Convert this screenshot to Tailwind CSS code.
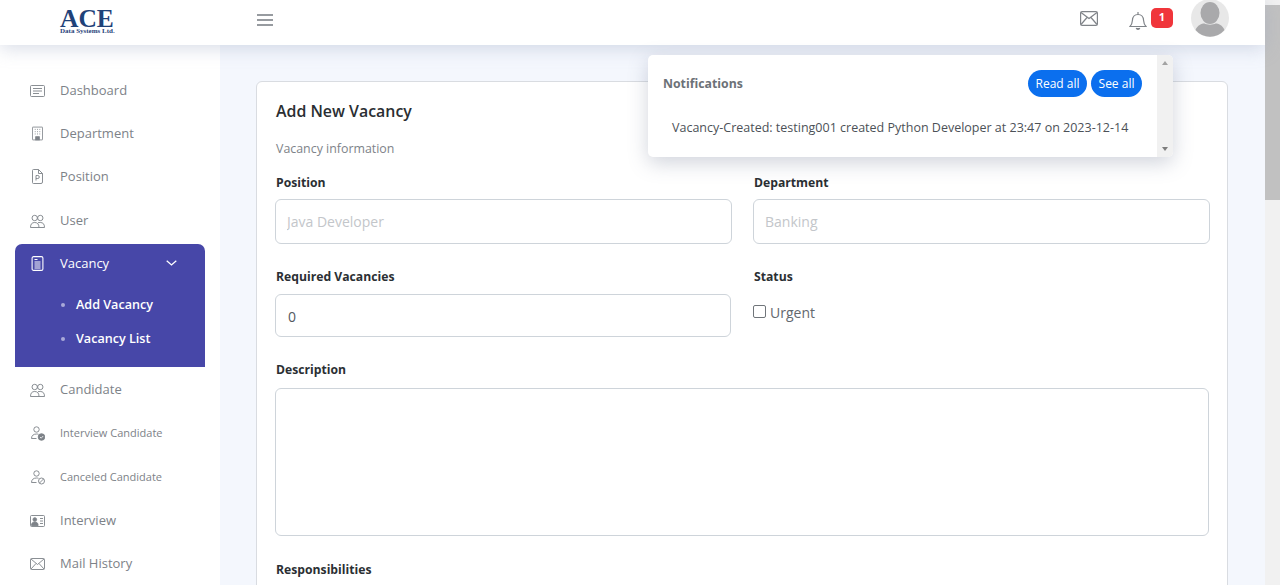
<!DOCTYPE html>
<html lang="en">
<head>
  <meta charset="UTF-8" />
  <title>Add New Vacancy - ACE</title>
  <script src="https://cdn.jsdelivr.net/npm/@tailwindcss/browser@4"></script>
</head>
<body class="h-[585px] overflow-hidden bg-[#f4f7fd] font-['Open_Sans',sans-serif]">
  <div class="relative flex h-[585px]">
    <div class="flex w-[1265px] flex-col">

      <!-- Header -->
      <header class="relative z-10 flex h-[45px] shrink-0 items-center bg-white shadow-[0_4px_18px_rgba(150,160,190,0.35)]">
        <div class="mt-[-1px] w-[257px] shrink-0 pl-[60px]">
          <div class="h-[19px] font-['Liberation_Serif',serif] text-[25.500px] leading-[20px] font-bold text-[#1f4279]">ACE</div>
          <div class="font-['Liberation_Serif',serif] text-[7px] leading-[7px] font-bold whitespace-nowrap text-[#1f4279]">Data Systems Ltd.</div>
        </div>
        <svg class="mt-[-5px] h-[20px] w-[16px] text-[#757b81]" viewBox="0 0 16 20" fill="none" stroke="currentColor" stroke-width="1.3"><path d="M0 5h16M0 10h16M0 15h16"/></svg>
        <div class="ml-auto flex items-center pr-[36px]">
          <svg class="mt-[-8px] h-[15px] w-[18px] text-[#808489]" viewBox="0 0 18 15" fill="none" stroke="currentColor" stroke-width="1.2"><rect x="0.600" y="0.600" width="16.800" height="13.800" rx="1.500"/><path d="M1 1.500l8 6 8-6M1 13.500l6-7M17 13.500l-6-7"/></svg>
          <svg class="mt-[-6px] ml-[31px] h-[20px] w-[18px] text-[#808489]" viewBox="0 0 18 20" fill="none" stroke="currentColor" stroke-width="1.2"><path d="M1 16.500c1.600-1.600 2.200-3 2.400-6 .2-3.600 2.400-6 5.600-6s5.400 2.400 5.600 6c.2 3 .8 4.400 2.400 6z"/><path d="M7.200 18a1.900 1.900 0 0 0 3.600 0" fill="currentColor"/><path d="M9 2v2.500"/></svg>
          <span class="mt-[-10px] ml-[4px] flex h-[20px] w-[22px] items-center justify-center rounded-[5px] bg-[#f0353b] text-[11px] font-bold text-white">1</span>
          <svg class="mt-[-9px] ml-[18px] h-[38px] w-[38px]" viewBox="0 0 38 38"><circle cx="19" cy="19" r="19" fill="#e8e8e8"/><ellipse cx="19" cy="14" rx="9.500" ry="11" fill="#a9a9ab"/><path d="M4.500 31c2-5 6-6.500 9-6.500 2 1.500 9 1.500 11 0 3 0 7 1.500 9 6.500a19 19 0 0 1-29 0z" fill="#a9a9ab"/></svg>
        </div>
      </header>

      <div class="flex min-h-0 flex-1">
        <!-- Sidebar -->
        <aside class="w-[220px] shrink-0 bg-white pt-[24px] pl-[15px] text-[13px] text-[#7d8288]">
          <a class="flex h-[43px] items-center">
            <svg class="ml-[15px] h-[12px] w-[15px]" viewBox="0 0 15 12" fill="none" stroke="currentColor" stroke-width="0.9"><rect x="0.500" y="0.500" width="14" height="11" rx="1"/><path d="M3 3.500h9M3 6h9M3 8.500h6"/></svg>
            <span class="ml-[15px]">Dashboard</span>
          </a>
          <a class="flex h-[43px] items-center">
            <svg class="ml-[17px] h-[15px] w-[11px]" viewBox="0 0 12 15" fill="none" stroke="currentColor" stroke-width="0.9"><rect x="0.500" y="0.500" width="11" height="14" rx="0.500"/><path d="M3 3h1M5.500 3h1M8 3h1M3 5.500h1M5.500 5.500h1M8 5.500h1M3 8h1M5.500 8h1M8 8h1"/><rect x="4" y="11" width="4" height="3.500" fill="currentColor"/></svg>
            <span class="ml-[17px]">Department</span>
          </a>
          <a class="flex h-[43px] items-center">
            <svg class="ml-[17px] h-[15px] w-[11px]" viewBox="0 0 11 15" fill="none" stroke="currentColor" stroke-width="0.9"><path d="M1.500 0.500h5l4 4v8.500a1.500 1.500 0 0 1-1.500 1.500h-7.500a1 1 0 0 1-1-1v-12a1 1 0 0 1 1-1z"/><path d="M6.500 0.500v4h4M4 11.500v-5h1.800a1.400 1.400 0 0 1 0 3h-1.800"/></svg>
            <span class="ml-[17px]">Position</span>
          </a>
          <a class="flex h-[46px] items-center">
            <svg class="ml-[15px] h-[14px] w-[15px]" viewBox="0 0 15 14" fill="none" stroke="currentColor" stroke-width="0.9"><circle cx="4.700" cy="4" r="2.700"/><circle cx="10.300" cy="4" r="2.700"/><path d="M0.500 13.500c0-3.500 1.500-5 4.200-5s4.300 1.500 4.300 5zM8 8.700c.6-.2 1.400-.2 2.300-.2 2.700 0 4.200 1.500 4.200 5h-5.500"/></svg>
            <span class="ml-[15px]">User</span>
          </a>

          <!-- Active group -->
          <div class="h-[123px] w-[190px] rounded-t-[7px] bg-[#4747a8] pt-[10px] text-white">
            <a class="flex items-center">
              <svg class="ml-[16px] h-[15px] w-[13px]" viewBox="0 0 12 15" fill="none" stroke="currentColor" stroke-width="1.100"><rect x="0.600" y="0.600" width="10.800" height="13.800" rx="1.500"/><path d="M3 3.500h3M3 6h6M3 8h6M3 10h6M3 12h6"/></svg>
              <span class="ml-[16px] leading-[18px]">Vacancy</span>
              <svg class="mr-[28px] ml-auto h-[6px] w-[11px]" viewBox="0 0 11 6" fill="none" stroke="currentColor" stroke-width="1.300"><path d="M0.700 0.700l4.800 4.300 4.800-4.300"/></svg>
            </a>
            <ul class="mt-[16px] ml-[46px] text-[12.600px] font-semibold">
              <li class="flex h-[34px] items-center"><span class="h-[4px] w-[4px] rounded-full bg-[#a9a9d8]"></span><span class="ml-[11px]">Add Vacancy</span></li>
              <li class="flex h-[34px] items-center"><span class="h-[4px] w-[4px] rounded-full bg-[#a9a9d8]"></span><span class="ml-[11px]">Vacancy List</span></li>
            </ul>
          </div>

          <a class="mt-[1px] flex h-[43px] items-center">
            <svg class="ml-[15px] h-[14px] w-[15px]" viewBox="0 0 15 14" fill="none" stroke="currentColor" stroke-width="0.9"><circle cx="4.700" cy="4" r="2.700"/><circle cx="10.300" cy="4" r="2.700"/><path d="M0.500 13.500c0-3.500 1.500-5 4.200-5s4.300 1.500 4.300 5zM8 8.700c.6-.2 1.400-.2 2.300-.2 2.700 0 4.200 1.500 4.200 5h-5.500"/></svg>
            <span class="ml-[15px]">Candidate</span>
          </a>
          <a class="flex h-[44px] items-center">
            <svg class="ml-[16px] h-[15px] w-[14px]" viewBox="0 0 14 15" fill="none" stroke="currentColor" stroke-width="0.9"><circle cx="5.500" cy="3.500" r="2.700"/><path d="M0.500 12.500c0-3 2-4.500 5-4.500 .8 0 1.500.1 2 .3M0.500 12.500h5"/><circle cx="10.500" cy="11" r="3.300" fill="currentColor"/><path d="M9 11l1.200 1.200 2-2.200" stroke="#fff" stroke-width="0.800"/></svg>
            <span class="ml-[15px] text-[11px]">Interview Candidate</span>
          </a>
          <a class="flex h-[44px] items-center">
            <svg class="ml-[16px] h-[15px] w-[14px]" viewBox="0 0 14 15" fill="none" stroke="currentColor" stroke-width="0.9"><circle cx="5.500" cy="3.500" r="2.700"/><path d="M0.500 12.500c0-3 2-4.500 5-4.500 .8 0 1.500.1 2 .3M0.500 12.500h5"/><circle cx="10.500" cy="11" r="3"/><path d="M8.500 13l4-4"/></svg>
            <span class="ml-[15px] text-[11px]">Canceled Candidate</span>
          </a>
          <a class="flex h-[43px] items-center">
            <svg class="ml-[15px] h-[12px] w-[15px]" viewBox="0 0 15 12" fill="none" stroke="currentColor" stroke-width="0.9"><rect x="0.500" y="0.500" width="14" height="11" rx="1"/><circle cx="4.800" cy="4.500" r="1.800" fill="currentColor"/><path d="M1.500 10.500c0-2.500 1.300-3.500 3.300-3.500s3.300 1 3.300 3.500z" fill="currentColor"/><path d="M10 3.500h3M10 6h3M10 8.500h3"/></svg>
            <span class="ml-[15px]">Interview</span>
          </a>
          <a class="flex h-[43px] items-center">
            <svg class="ml-[15px] h-[12px] w-[15px]" viewBox="0 0 15 12" fill="none" stroke="currentColor" stroke-width="0.9"><rect x="0.500" y="0.500" width="14" height="11" rx="1"/><path d="M1 1l6.500 5.500 6.500-5.500M1 11l5-5.500M14 11l-5-5.500"/></svg>
            <span class="ml-[15px]">Mail History</span>
          </a>
        </aside>

        <!-- Main content -->
        <main class="min-w-0 flex-1 pt-[36px] pl-[36px]">
          <section class="h-[600px] w-[972px] rounded-[6px] border border-[#d9dce1] bg-white px-[18px] pt-[17px]">
            <h1 class="ml-[1px] text-[15.900px] leading-[24px] font-semibold text-[#2a2e32]">Add New Vacancy</h1>
            <p class="mt-[17px] ml-[1px] text-[12.400px] leading-[18px] text-[#7e8389]">Vacancy information</p>

            <div class="mt-[16px] grid grid-cols-[457px_457px] gap-x-[21px]">
              <div>
                <label class="ml-[1px] block text-[12.200px] leading-[18px] font-bold text-[#2b2f33]">Position</label>
                <input placeholder="Java Developer" class="mt-[7px] block h-[45px] w-full rounded-[6px] border border-[#ced4da] px-[11px] text-[14px] placeholder:text-[#c3c6ca]" />
              </div>
              <div>
                <label class="ml-[1px] block text-[12.200px] leading-[18px] font-bold text-[#2b2f33]">Department</label>
                <input placeholder="Banking" class="mt-[7px] block h-[45px] w-full rounded-[6px] border border-[#ced4da] px-[11px] text-[14px] placeholder:text-[#c3c6ca]" />
              </div>
              <div class="mt-[24px]">
                <label class="ml-[1px] block text-[12.200px] leading-[18px] font-bold text-[#2b2f33]">Required Vacancies</label>
                <input value="0" class="mt-[8px] block h-[43px] w-[456px] rounded-[6px] border border-[#ced4da] px-[12px] pt-[1px] text-[14px] text-[#54595f]" />
              </div>
              <div class="mt-[24px]">
                <label class="ml-[1px] block text-[12.200px] leading-[18px] font-bold text-[#2b2f33]">Status</label>
                <label class="mt-[17px] flex items-center text-[14px] leading-[20px] text-[#63686e]">
                  <span class="mt-[-3px] h-[13px] w-[13px] rounded-[2px] border border-[#70757a] bg-white"></span>
                  <span class="ml-[4px]">Urgent</span>
                </label>
              </div>
            </div>

            <label class="mt-[24px] ml-[1px] block text-[12.200px] leading-[18px] font-bold text-[#2b2f33]">Description</label>
            <textarea class="mt-[9px] block h-[148px] w-[934px] resize-none rounded-[6px] border border-[#ced4da]"></textarea>

            <label class="mt-[25px] ml-[1px] block text-[12.200px] leading-[18px] font-bold text-[#2b2f33]">Responsibilities</label>
          </section>
        </main>
      </div>
    </div>

    <!-- Page scrollbar -->
    <div class="flex w-[15px] shrink-0 flex-col bg-[#f1f1f1]">
      <div class="h-[5px]"></div>
      <div class="h-[195px] bg-[#c1c1c1]"></div>
    </div>

    <!-- Notifications dropdown -->
    <div class="absolute top-[55px] left-[648px] z-20 flex h-[102px] w-[525px] rounded-[5px] bg-white shadow-[0_6px_20px_rgba(90,100,130,0.28)]">
      <div class="min-w-0 flex-1 pt-[15px] pr-[15px] pl-[15px]">
        <div class="flex h-[27px] items-center justify-between">
          <span class="mt-[2px] text-[12.300px] font-bold text-[#6c7177]">Notifications</span>
          <div class="flex gap-[4px]">
            <button class="h-[27px] w-[59px] rounded-full bg-[#0b6fee] pt-[1px] text-[12px] text-white">Read all</button>
            <button class="h-[27px] w-[51px] rounded-full bg-[#0b6fee] pt-[1px] text-[12px] text-white">See all</button>
          </div>
        </div>
        <p class="mt-[22px] ml-[9px] text-[12.500px] leading-[18px] whitespace-nowrap text-[#4c5157]">Vacancy-Created: testing001 created Python Developer at 23:47 on 2023-12-14</p>
      </div>
      <div class="flex w-[16px] shrink-0 flex-col items-center justify-between rounded-r-[5px] bg-[#f1f1f1] py-[6px]">
        <span class="h-0 w-0 border-x-[3.500px] border-b-[4px] border-x-transparent border-b-[#a3a3a3]"></span>
        <span class="h-0 w-0 border-x-[3.500px] border-t-[4px] border-x-transparent border-t-[#7d7d7d]"></span>
      </div>
    </div>
  </div>
</body>
</html>
